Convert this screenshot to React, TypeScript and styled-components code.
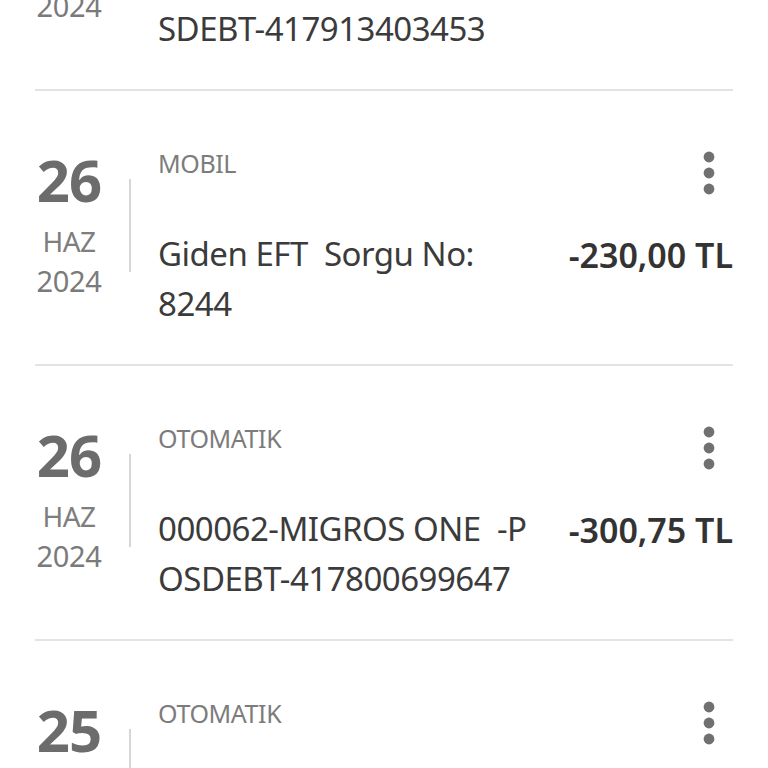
import React from 'react'
import styled, { createGlobalStyle } from 'styled-components'

const GlobalStyle = createGlobalStyle`
  html, body {
    margin: 0;
    padding: 0;
    background: #ffffff;
    overflow: hidden;
  }
  body {
    font-family: "Noto Sans", "Open Sans", sans-serif;
  }
`

type Transaction = {
  day: string
  month: string
  year: string
  channel: string
  lines: string[]
  amount: string
}

const transactions: Transaction[] = [
  {
    day: '27',
    month: 'HAZ',
    year: '2024',
    channel: 'OTOMATIK',
    lines: ['000062-MIGROS ONE  -PO', 'SDEBT-417913403453'],
    amount: '-412,50 TL',
  },
  {
    day: '26',
    month: 'HAZ',
    year: '2024',
    channel: 'MOBIL',
    lines: ['Giden EFT  Sorgu No:', '8244'],
    amount: '-230,00 TL',
  },
  {
    day: '26',
    month: 'HAZ',
    year: '2024',
    channel: 'OTOMATIK',
    lines: ['000062-MIGROS ONE  -P', 'OSDEBT-417800699647'],
    amount: '-300,75 TL',
  },
  {
    day: '25',
    month: 'HAZ',
    year: '2024',
    channel: 'OTOMATIK',
    lines: ['000062-MIGROS ONE  -P', 'OSDEBT-417705512388'],
    amount: '-86,40 TL',
  },
]

const KebabIcon = () => (
  <svg width="24" height="50" viewBox="0 0 24 50" fill="#707070">
    <circle cx="12" cy="9" r="5.4" />
    <circle cx="12" cy="25" r="5.4" />
    <circle cx="12" cy="41" r="5.4" />
  </svg>
)

const App = () => {
  return (
    <>
      <GlobalStyle />
      <List>
        {transactions.map((t, i) => (
          <Item key={i}>
            <DateCol>
              <DateBlock>
                <Day>{t.day}</Day>
                <Month>{t.month}</Month>
                <Year>{t.year}</Year>
              </DateBlock>
              <Divider />
            </DateCol>
            <Content>
              <Header>
                <Channel>{t.channel}</Channel>
                <MenuButton aria-label="menu">
                  <KebabIcon />
                </MenuButton>
              </Header>
              <Body>
                <Desc>
                  {t.lines.map((l, j) => (
                    <span key={j}>{l}</span>
                  ))}
                </Desc>
                <Amount>{t.amount}</Amount>
              </Body>
            </Content>
          </Item>
        ))}
      </List>
    </>
  )
}

const List = styled.main`
  margin-top: -184px;
  padding: 0 35px;
  display: flex;
  flex-direction: column;
`

const Item = styled.section`
  display: flex;
  align-items: flex-start;
  padding: 57px 0 35px;
  border-bottom: 2px solid #e3e3e3;
`

const DateCol = styled.div`
  display: flex;
  align-items: center;
  margin-top: 1px;
`

const DateBlock = styled.div`
  width: 68px;
  display: flex;
  flex-direction: column;
  align-items: center;
  text-align: center;
`

const Day = styled.span`
  font-size: 58px;
  font-weight: 700;
  line-height: 62px;
  letter-spacing: -1px;
  color: #6c6c6c;
  margin-bottom: 10px;
`

const Month = styled.span`
  font-size: 28px;
  line-height: 40px;
  letter-spacing: -0.5px;
  color: #7e7e7e;
`

const Year = styled.span`
  font-size: 29px;
  line-height: 40px;
  letter-spacing: -0.3px;
  color: #7a7a7a;
`

const Divider = styled.div`
  width: 2px;
  height: 93px;
  margin-left: 26px;
  background: #d6d6d6;
`

const Content = styled.div`
  flex: 1;
  margin-left: 27px;
  display: flex;
  flex-direction: column;
`

const Header = styled.div`
  display: flex;
  justify-content: space-between;
  align-items: flex-start;
  height: 50px;
`

const Channel = styled.span`
  font-size: 25px;
  line-height: 30px;
  letter-spacing: -0.4px;
  color: #7c7c7c;
`

const MenuButton = styled.button`
  border: none;
  background: none;
  padding: 0;
  margin-right: 12px;
  display: flex;
  cursor: pointer;
`

const Body = styled.div`
  margin-top: 31px;
  display: flex;
  justify-content: space-between;
  align-items: flex-start;
`

const Desc = styled.div`
  display: flex;
  flex-direction: column;
  font-size: 33px;
  line-height: 50px;
  letter-spacing: -0.5px;
  color: #3b3b3b;
  white-space: pre;

  span {
    display: block;
  }
`

const Amount = styled.span`
  font-size: 34px;
  font-weight: 600;
  line-height: 50px;
  letter-spacing: 0;
  color: #333333;
  white-space: nowrap;
  margin-top: 1px;
`

export default App
